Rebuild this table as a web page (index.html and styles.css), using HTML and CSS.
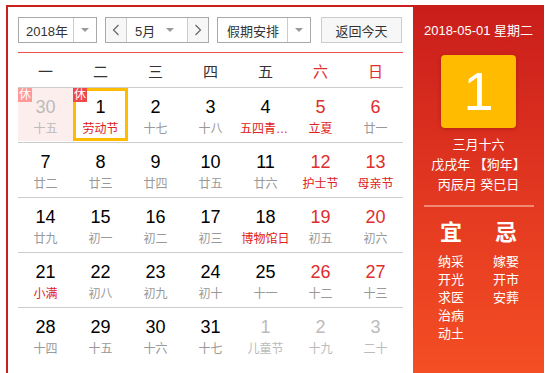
FILE: index.html
```html
<!DOCTYPE html>
<html lang="zh-CN">
<head>
<meta charset="utf-8">
<title>万年历</title>
<link rel="stylesheet" href="styles.css">
</head>
<body>
<div class="cal">
  <div class="main">
    <div class="toolbar">
      <div class="select year">
        <span class="sel-text">2018年</span>
        <span class="sel-arrow"><i class="tri"></i></span>
      </div>
      <div class="month-group">
        <span class="nav">
          <svg width="8" height="12" viewBox="0 0 8 12"><path d="M6.5 1 L1.5 6 L6.5 11" fill="none" stroke="#666" stroke-width="1.2"/></svg>
        </span>
        <span class="month">
          <span class="sel-text">5月</span>
          <i class="tri"></i>
        </span>
        <span class="nav">
          <svg width="8" height="12" viewBox="0 0 8 12"><path d="M1.5 1 L6.5 6 L1.5 11" fill="none" stroke="#666" stroke-width="1.2"/></svg>
        </span>
      </div>
      <div class="select holiday">
        <span class="sel-text">假期安排</span>
        <span class="sel-arrow"><i class="tri"></i></span>
      </div>
      <button class="today">返回今天</button>
    </div>

    <div class="table">
      <div class="week">
        <span>一</span><span>二</span><span>三</span><span>四</span><span>五</span><span class="red">六</span><span class="red">日</span>
      </div>
      <div class="row">
        <div class="cell other rest"><i class="badge dim">休</i><b>30</b><em>十五</em></div>
        <div class="cell sel"><i class="badge">休</i><b>1</b><em class="fest">劳动节</em></div>
        <div class="cell"><b>2</b><em>十七</em></div>
        <div class="cell"><b>3</b><em>十八</em></div>
        <div class="cell"><b>4</b><em class="fest">五四青年节</em></div>
        <div class="cell wk"><b>5</b><em class="fest">立夏</em></div>
        <div class="cell wk"><b>6</b><em>廿一</em></div>
      </div>
      <div class="row">
        <div class="cell"><b>7</b><em>廿二</em></div>
        <div class="cell"><b>8</b><em>廿三</em></div>
        <div class="cell"><b>9</b><em>廿四</em></div>
        <div class="cell"><b>10</b><em>廿五</em></div>
        <div class="cell"><b>11</b><em>廿六</em></div>
        <div class="cell wk"><b>12</b><em class="fest">护士节</em></div>
        <div class="cell wk"><b>13</b><em class="fest">母亲节</em></div>
      </div>
      <div class="row">
        <div class="cell"><b>14</b><em>廿九</em></div>
        <div class="cell"><b>15</b><em>初一</em></div>
        <div class="cell"><b>16</b><em>初二</em></div>
        <div class="cell"><b>17</b><em>初三</em></div>
        <div class="cell"><b>18</b><em class="fest">博物馆日</em></div>
        <div class="cell wk"><b>19</b><em>初五</em></div>
        <div class="cell wk"><b>20</b><em>初六</em></div>
      </div>
      <div class="row">
        <div class="cell"><b>21</b><em class="fest">小满</em></div>
        <div class="cell"><b>22</b><em>初八</em></div>
        <div class="cell"><b>23</b><em>初九</em></div>
        <div class="cell"><b>24</b><em>初十</em></div>
        <div class="cell"><b>25</b><em>十一</em></div>
        <div class="cell wk"><b>26</b><em>十二</em></div>
        <div class="cell wk"><b>27</b><em>十三</em></div>
      </div>
      <div class="row last">
        <div class="cell"><b>28</b><em>十四</em></div>
        <div class="cell"><b>29</b><em>十五</em></div>
        <div class="cell"><b>30</b><em>十六</em></div>
        <div class="cell"><b>31</b><em>十七</em></div>
        <div class="cell other"><b>1</b><em>儿童节</em></div>
        <div class="cell other"><b>2</b><em>十九</em></div>
        <div class="cell other"><b>3</b><em>二十</em></div>
      </div>
    </div>
  </div>

  <div class="side">
    <div class="date">2018-05-01 星期二</div>
    <div class="bigday">1</div>
    <div class="lunar">
      <div>三月十六</div>
      <div>戊戌年 【狗年】</div>
      <div>丙辰月 癸巳日</div>
    </div>
    <div class="divider"></div>
    <div class="yiji">
      <div class="col">
        <div class="head">宜</div>
        <div class="item">纳采</div>
        <div class="item">开光</div>
        <div class="item">求医</div>
        <div class="item">治病</div>
        <div class="item">动土</div>
      </div>
      <div class="col">
        <div class="head">忌</div>
        <div class="item">嫁娶</div>
        <div class="item">开市</div>
        <div class="item">安葬</div>
      </div>
    </div>
  </div>
</div>
</body>
</html>
```

FILE: styles.css
```css
* { box-sizing: border-box; }
html, body { margin: 0; padding: 0; background: #fff; }
body {
  font-family: "Liberation Sans", "Noto Sans CJK SC", sans-serif;
  color: #333;
}

.cal {
  display: flex;
  margin: 5px 0 0 6px;
  width: 538px;
  height: 372px;
  border-top: 2px solid #cb1f1c;
  border-left: 2px solid #cb1f1c;
}

.main {
  width: 405px;
  padding: 10px 10px 0 10px;
}

.toolbar {
  display: flex;
  height: 26px;
  align-items: stretch;
}

.select {
  display: flex;
  border: 1px solid #a9a9a9;
  background: #fff;
  font-size: 13px;
  color: #333;
}
.select .sel-text {
  display: flex;
  align-items: center;
  justify-content: center;
}
.select .sel-arrow {
  display: flex;
  align-items: center;
  justify-content: center;
  width: 23px;
  border-left: 1px solid #ccc;
}
.tri {
  display: block;
  width: 0;
  height: 0;
  border-left: 4px solid transparent;
  border-right: 4px solid transparent;
  border-top: 4px solid #999;
}

.year { width: 79px; }
.year .sel-text { width: 54px; padding-left: 2px; }

.month-group {
  display: flex;
  width: 104px;
  margin-left: 8px;
  border: 1px solid #a9a9a9;
}
.nav {
  display: flex;
  align-items: center;
  justify-content: center;
  width: 21px;
  background: #f7f7f7;
}
.nav:first-child { border-right: 1px solid #ccc; }
.nav:last-child { border-left: 1px solid #ccc; }
.month {
  flex: 1;
  display: flex;
  align-items: center;
  justify-content: space-between;
  padding: 0 13px 0 8px;
  font-size: 13px;
  color: #333;
  background: #fff;
}

.holiday { width: 94px; margin-left: 8px; }
.holiday .sel-text { width: 70px; padding-left: 1px; }

.today {
  width: 81px;
  margin-left: 10px;
  border: 1px solid #ccc;
  background: #f7f7f7;
  font-family: inherit;
  font-size: 13px;
  color: #333;
  padding: 0;
}

.table {
  margin-top: 9px;
  border-top: 1px solid #e9524a;
}
.week {
  display: grid;
  grid-template-columns: repeat(7, minmax(0, 1fr));
  height: 35px;
  border-bottom: 1px solid #ccc;
  align-items: center;
  text-align: center;
  font-size: 15px;
  color: #333;
}
.week .red { color: #e02d2d; }

.row {
  display: grid;
  grid-template-columns: repeat(7, minmax(0, 1fr));
  height: 55px;
  border-bottom: 1px solid #ccc;
}
.row.last { border-bottom: 0; }

.cell {
  position: relative;
  min-width: 0;
  height: 53px;
  text-align: center;
  padding: 0 2px;
}
.cell b {
  display: block;
  font-weight: normal;
  font-size: 18px;
  line-height: 22px;
  padding-top: 8px;
  color: #000;
}
.cell em {
  display: block;
  font-style: normal;
  font-size: 12px;
  line-height: 22px;
  color: #999;
  white-space: nowrap;
  overflow: hidden;
  text-overflow: ellipsis;
}
.cell em.fest { color: #e02020; }
.cell.wk b { color: #e02d2d; }
.cell.other b, .cell.other em { color: #bbb; }
.cell.rest { background: #fdeeee; }
.cell.sel { border: 3px solid #ffbb00; padding: 0; }
.cell.sel b { padding-top: 5px; }

.badge {
  position: absolute;
  left: 0;
  top: 0;
  width: 14px;
  height: 14px;
  background: #f04848;
  color: #fff;
  font-style: normal;
  font-size: 12px;
  line-height: 14px;
  text-align: center;
}
.badge.dim { background: #f99; }
.cell.sel .badge { left: -3px; top: -3px; }

.side {
  width: 131px;
  margin-top: -2px;
  height: 374px;
  background: linear-gradient(to bottom, #c91d1b 0%, #e43a21 55%, #f44f24 100%);
  color: #fff;
  display: flex;
  flex-direction: column;
  align-items: center;
  padding-top: 16px;
}
.date {
  font-size: 13px;
  line-height: 20px;
}
.bigday {
  margin-top: 14px;
  width: 75px;
  height: 73px;
  border-radius: 4px;
  background: #ffbb00;
  box-shadow: 0 1px 4px rgba(120, 0, 0, 0.35);
  font-size: 54px;
  line-height: 73px;
  text-align: center;
  color: #fff;
}
.lunar {
  margin-top: 7px;
  font-size: 13px;
  line-height: 20px;
  text-align: center;
}
.divider {
  margin-top: 10px;
  width: 110px;
  height: 2px;
  background: rgba(255, 200, 190, 0.55);
}
.yiji {
  display: flex;
  margin-top: 11px;
}
.col {
  width: 55px;
  text-align: center;
}
.head {
  font-size: 22px;
  line-height: 30px;
  font-weight: bold;
  margin-bottom: 5px;
}
.item {
  font-size: 13px;
  line-height: 18px;
}
```
